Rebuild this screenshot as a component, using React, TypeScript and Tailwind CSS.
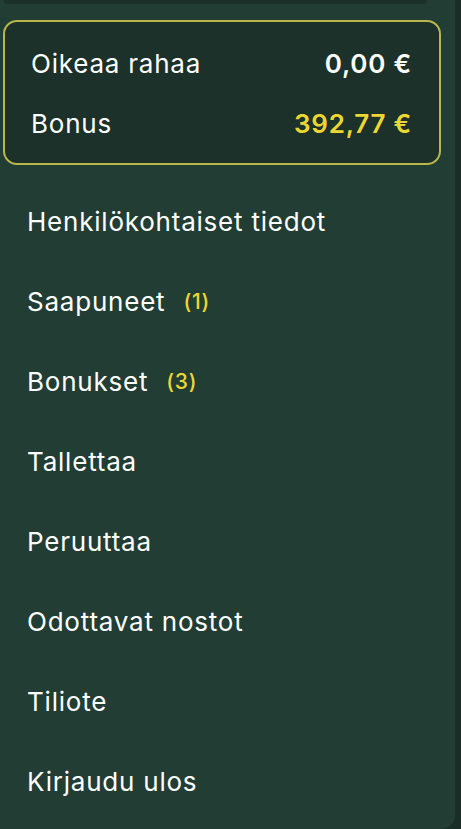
import React from "react";

const menu = [
  { label: "Henkilökohtaiset tiedot" },
  { label: "Saapuneet", count: 1 },
  { label: "Bonukset", count: 3 },
  { label: "Tallettaa" },
  { label: "Peruuttaa" },
  { label: "Odottavat nostot" },
  { label: "Tiliote" },
  { label: "Kirjaudu ulos" },
];

export default function App() {
  return (
    <div
      className="min-h-[829px] w-[461px] bg-[#1a2d26] overflow-hidden"
      style={{ fontFamily: "Inter, 'Noto Sans', sans-serif" }}
    >
      <div className="w-[455px] h-[829px] bg-[#223d34] rounded-br-[14px] overflow-hidden">
        {/* header remnant */}
        <div className="ml-[4px] mr-[28px] h-[4px] rounded-b-[12px] bg-[#1b3029]" />

        {/* balance card */}
        <div className="mt-[16px] ml-[3px] w-[438px] rounded-[14px] border-2 border-[#b9b64c] bg-[#1c3129] pl-[26px] pr-[27px] pt-[27px] pb-[24px] flex flex-col gap-[30px]">
          <div className="flex items-center justify-between text-[26px] leading-[30px] tracking-[0.03em] text-white">
            <span>Oikeaa rahaa</span>
            <span className="font-semibold">0,00 €</span>
          </div>
          <div className="flex items-center justify-between text-[26px] leading-[30px] tracking-[0.03em] text-white">
            <span>Bonus</span>
            <span className="font-semibold text-[#ecd732]">392,77 €</span>
          </div>
        </div>

        {/* menu */}
        <ul className="mt-[17px] flex flex-col">
          {menu.map((item) => (
            <li
              key={item.label}
              className="h-[80px] pl-[27px] flex items-center text-[26px] leading-[30px] tracking-[0.03em] text-white"
            >
              <span>{item.label}</span>
              {item.count !== undefined && (
                <span className="ml-[18px] text-[21px] font-medium text-[#ecd732]">({item.count})</span>
              )}
            </li>
          ))}
        </ul>
      </div>
    </div>
  );
}
